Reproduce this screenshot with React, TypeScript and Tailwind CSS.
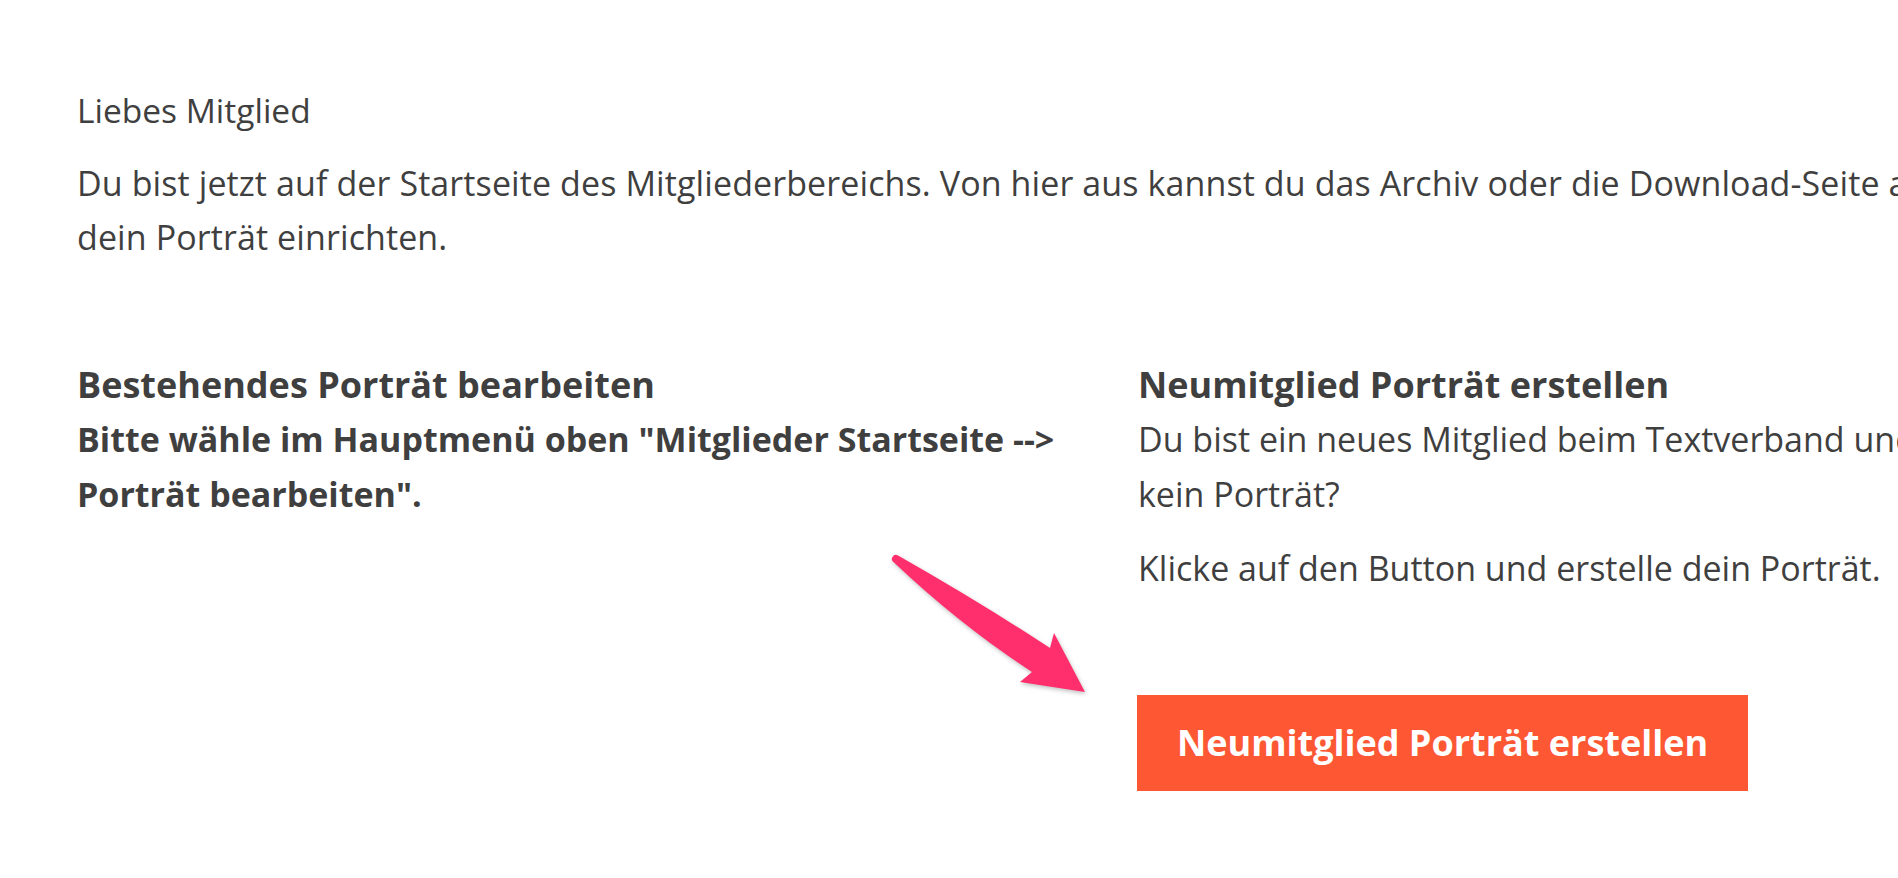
export default function App() {
  return (
    <div className="relative w-screen h-screen overflow-hidden bg-white font-['Open_Sans',sans-serif] text-[#3f3f3f]">
      <div className="w-[2178px] pl-[77px] pt-[83px]">
        <p className="text-[33.5px] leading-[54px]">Liebes Mitglied</p>
        <p className="mt-[19px] w-[2080px] text-[34px] leading-[54px] tracking-[0.1px]">
          Du bist jetzt auf der Startseite des Mitgliederbereichs. Von hier aus kannst du das Archiv oder die
          Download-Seite aufrufen oder dein Porträt einrichten.
        </p>

        <div className="mt-[93px] grid grid-cols-[1040px_990px] gap-[21px] text-[34px] leading-[55px]">
          <div>
            <h3 className="text-[36px] font-bold">Bestehendes Porträt bearbeiten</h3>
            <p className="font-bold">
              Bitte wähle im Hauptmenü oben "Mitglieder Startseite --&gt; Porträt bearbeiten".
            </p>
          </div>
          <div>
            <h3 className="text-[36px] font-bold">Neumitglied Porträt erstellen</h3>
            <p>Du bist ein neues Mitglied beim Textverband und hast noch kein Porträt?</p>
            <p className="mt-[19px]">Klicke auf den Button und erstelle dein Porträt.</p>
            <button className="-ml-px mt-[99px] bg-[#fe5734] px-[40px] py-[21px] text-[36px] font-bold leading-[54px] text-white">
              Neumitglied Porträt erstellen
            </button>
          </div>
        </div>
      </div>

      <svg
        className="absolute left-[880px] top-[540px] drop-shadow-[1px_2px_2px_rgba(0,0,0,0.25)]"
        width="220"
        height="170"
        viewBox="0 0 220 170"
      >
        <path
          d="M18 15.5 Q100 62 170 108 L174 93 L205 152 L140 142 L152 132 Q80 85 14 22.5 A3.6 3.6 0 0 1 18 15.5 Z"
          fill="#ff2e6c"
        />
      </svg>
    </div>
  );
}
